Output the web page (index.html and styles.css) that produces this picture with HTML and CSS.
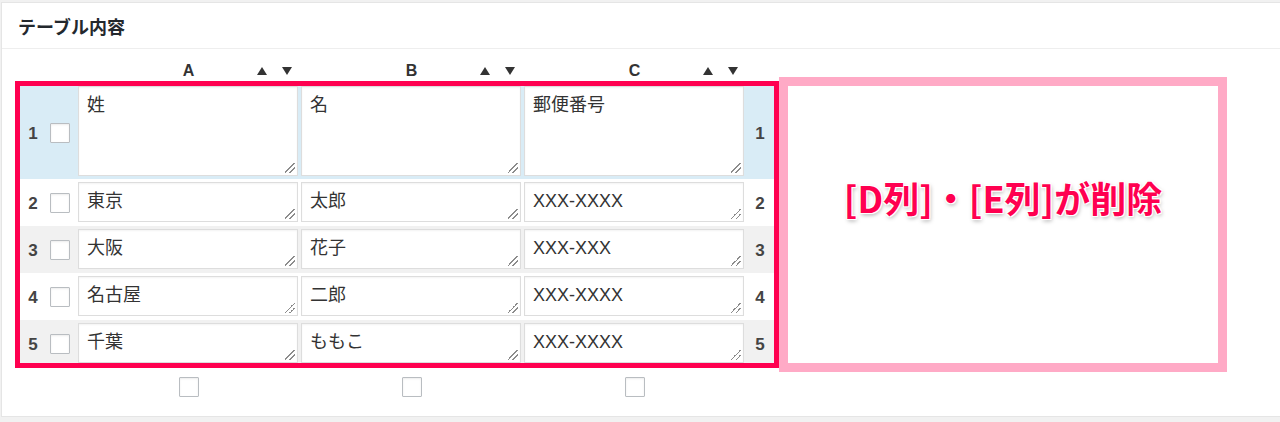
FILE: index.html
```html
<!DOCTYPE html>
<html lang="ja">
<head>
<meta charset="utf-8">
<title>テーブル内容</title>
<link rel="stylesheet" href="styles.css">
</head>
<body>
<div class="panel">
  <div class="panel-head"><h2 class="panel-title">テーブル内容</h2></div>
  <div class="panel-body">
    <div class="cols col-heads">
      <span></span><span></span>
      <div class="col-head"><span class="col-letter">A</span><span class="sort"><svg class="tri" viewBox="0 0 10 8"><path d="M5 0L10 8H0Z"/></svg><svg class="tri" viewBox="0 0 10 8"><path d="M0 0H10L5 8Z"/></svg></span></div>
      <div class="col-head"><span class="col-letter">B</span><span class="sort"><svg class="tri" viewBox="0 0 10 8"><path d="M5 0L10 8H0Z"/></svg><svg class="tri" viewBox="0 0 10 8"><path d="M0 0H10L5 8Z"/></svg></span></div>
      <div class="col-head"><span class="col-letter">C</span><span class="sort"><svg class="tri" viewBox="0 0 10 8"><path d="M5 0L10 8H0Z"/></svg><svg class="tri" viewBox="0 0 10 8"><path d="M0 0H10L5 8Z"/></svg></span></div>
      <span></span>
    </div>
    <div class="stage">
      <div class="table-frame">
        <div class="row row-head">
          <span class="num">1</span><span class="check"></span>
          <div class="cell">姓</div><div class="cell">名</div><div class="cell">郵便番号</div>
          <span class="num">1</span>
        </div>
        <div class="row">
          <span class="num">2</span><span class="check"></span>
          <div class="cell">東京</div><div class="cell">太郎</div><div class="cell">XXX-XXXX</div>
          <span class="num">2</span>
        </div>
        <div class="row row-alt">
          <span class="num">3</span><span class="check"></span>
          <div class="cell">大阪</div><div class="cell">花子</div><div class="cell">XXX-XXX</div>
          <span class="num">3</span>
        </div>
        <div class="row">
          <span class="num">4</span><span class="check"></span>
          <div class="cell">名古屋</div><div class="cell">二郎</div><div class="cell">XXX-XXXX</div>
          <span class="num">4</span>
        </div>
        <div class="row row-alt">
          <span class="num">5</span><span class="check"></span>
          <div class="cell">千葉</div><div class="cell">ももこ</div><div class="cell">XXX-XXXX</div>
          <span class="num">5</span>
        </div>
      </div>
      <div class="deleted-note"><p class="note-text">[D列]・[E列]が削除</p></div>
    </div>
    <div class="cols foot">
      <span></span><span></span>
      <span class="check check-foot"></span>
      <span class="check check-foot"></span>
      <span class="check check-foot"></span>
      <span></span>
    </div>
  </div>
</div>
</body>
</html>
```

FILE: styles.css
```css
html, body {
  margin: 0;
  background: #f1f1f1;
  font-family: "Liberation Sans", "Noto Sans CJK JP", sans-serif;
  color: #32373c;
  overflow: hidden;
}

.panel {
  margin: 2px 0 0 1px;
  background: #fff;
  border: 1px solid #e5e5e5;
  border-right: none;
}

.panel-head {
  height: 45px;
  border-bottom: 1px solid #eeeeee;
  display: flex;
  align-items: center;
  padding-left: 16px;
}

.panel-title {
  margin: 0;
  font: 700 18px/1 "Noto Sans CJK JP", sans-serif;
  color: #23282d;
}

.panel-body {
  padding: 11px 0 19px 13px;
}

.cols,
.row {
  display: grid;
  grid-template-columns: 26px 31px 223px 223px 223px 28px;
  width: 754px;
}

.cols {
  margin-left: 5px;
}

.col-heads {
  height: 22px;
  align-items: center;
}

.col-head {
  display: grid;
  align-items: center;
}

.col-head > * {
  grid-area: 1 / 1;
}

.col-letter {
  justify-self: center;
  font: 700 16px/1 "Liberation Sans", sans-serif;
  color: #333;
}

.sort {
  justify-self: end;
  display: flex;
  gap: 15px;
  margin-right: 8px;
}

.tri {
  width: 10px;
  height: 8px;
  fill: #333;
  display: block;
}

.stage {
  display: flex;
  align-items: flex-start;
  margin-top: -5px;
}

.table-frame {
  flex: none;
  margin-top: 4px;
  border: 5px solid #ff0050;
  height: 277px;
  overflow: hidden;
}

.row {
  height: 47px;
  align-items: start;
}

.row-head {
  height: 93px;
  background: #d9ecf6;
}

.row-alt {
  background: #f1f1f1;
}

.num {
  align-self: center;
  text-align: center;
  font: 700 17px/1 "Liberation Sans", sans-serif;
  color: #444;
  padding-top: 2px;
}

.check {
  align-self: center;
  margin-left: 4px;
  width: 20px;
  height: 20px;
  box-sizing: border-box;
  border: 1px solid #b9bdc1;
  border-radius: 1px;
  background: #fff;
  box-shadow: inset 0 1px 2px rgba(0, 0, 0, 0.08);
}

.check-foot {
  justify-self: center;
  margin-left: 0;
}

.cell {
  position: relative;
  margin: 3px 2px 0 1px;
  height: 40px;
  box-sizing: border-box;
  border: 1px solid #dddddd;
  background: #fff;
  padding: 6px 8px 0;
  font-size: 18px;
  line-height: 24px;
  color: #333;
  box-shadow: inset 0 1px 2px rgba(0, 0, 0, 0.05);
}

.row-head .cell {
  margin-top: 0;
  height: 90px;
}

.cell::after {
  content: "";
  position: absolute;
  right: 2px;
  bottom: 2px;
  width: 10px;
  height: 10px;
  background: linear-gradient(135deg,
    transparent 0 45%,
    #8c8c8c 45% 54%,
    transparent 54% 70%,
    #8c8c8c 70% 79%,
    transparent 79%);
}

.deleted-note {
  flex: none;
  box-sizing: border-box;
  width: 448px;
  height: 295px;
  border: 9px solid #ffaac6;
  background: #fff;
  display: flex;
  justify-content: center;
  align-items: flex-start;
  padding-top: 89px;
}

.note-text {
  margin: 0;
  font: 700 36px/44px "Noto Sans CJK JP", sans-serif;
  letter-spacing: 0;
  color: #ff0050;
  text-shadow:
    -1px -1px 0 #fff, 1px -1px 0 #fff, -1px 1px 0 #fff, 1px 1px 0 #fff,
    0 0 3px #fff,
    1px 2px 4px rgba(0, 0, 0, 0.35);
}

.foot {
  margin-top: 5px;
  height: 20px;
}
```
